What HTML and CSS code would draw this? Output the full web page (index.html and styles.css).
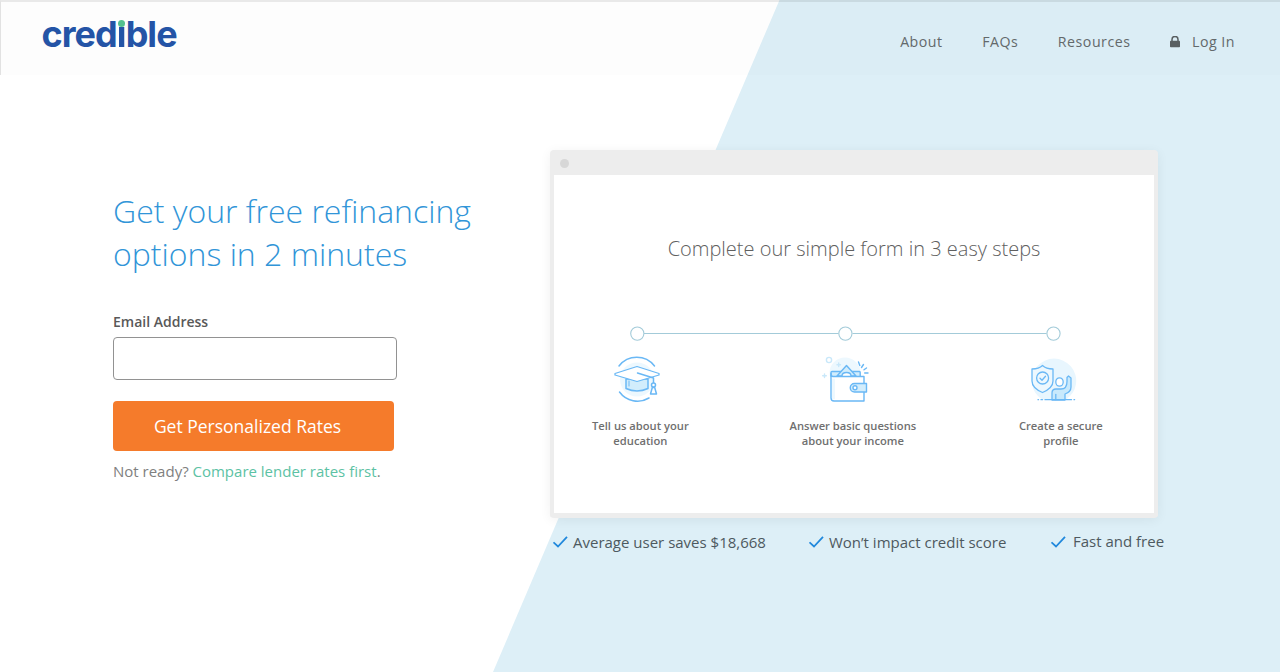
FILE: index.html
```html
<!DOCTYPE html>
<html lang="en">
<head>
<meta charset="utf-8">
<title>Credible</title>
<link rel="stylesheet" href="styles.css">
</head>
<body>
<div class="page">
  <header class="header">
    <a class="logo" aria-label="credible">cred<span class="logo-i">i</span>ble</a>
    <nav class="nav">
      <a class="nav-about">About</a>
      <a class="nav-faqs">FAQs</a>
      <a class="nav-resources">Resources</a>
      <a class="login"><svg width="10" height="12" viewBox="0 0 10 12"><path d="M2 5V3.4a3 3 0 0 1 6 0V5" fill="none" stroke="#595f61" stroke-width="1.5"/><rect y="4.8" width="10" height="6.4" rx=".8" fill="#595f61"/></svg><span>Log In</span></a>
    </nav>
  </header>
  <main class="main">
    <section class="signup">
      <h1 class="headline"><span class="line-one">Get your free refinancing</span><br><span class="line-two">options in 2 minutes</span></h1>
      <label class="label" for="email">Email Address</label>
      <input class="input" id="email" type="email">
      <button class="button">Get Personalized Rates</button>
      <p class="note">Not ready? <a class="link">Compare lender rates first</a>.</p>
    </section>
    <section class="preview">
      <div class="window">
        <div class="window-bar"><span class="window-dot"></span></div>
        <div class="window-body">
          <h2 class="title">Complete our simple form in 3 easy steps</h2>
          <svg class="track" width="433" height="16" viewBox="0 0 433 16" fill="none" stroke="#a3cbd9" stroke-width="1.1"><path d="M15 7.5H209.500M223.500 7.5H417.500"/><circle cx="8.300" cy="7.6" r="6.6"/><circle cx="216.400" cy="7.6" r="6.6"/><circle cx="424.500" cy="7.6" r="6.6"/></svg>
          <div class="steps">
            <div class="step">
              <svg class="icon" width="50" height="50" viewBox="0 0 50 50" fill="none" stroke="#6ab8f5" stroke-width="1.5" stroke-linecap="round" stroke-linejoin="round">
                <circle cx="25" cy="24.500" r="17" fill="#edf8fe" stroke="none"/>
                <path d="M7 11a22.4 22.4 0 0 1 35.500 0M7.500 37a22.300 22.300 0 0 0 29.500 6"/>
                <path d="M14 24v9.500q11 5 22 0V24z" fill="#d2edfc"/>
                <path d="M17 26v5" stroke-width="1"/>
                <path d="M3 18.500v1.500L25 26.500l22-6.500v-1.500L25 11.500z" fill="#fff" stroke-width="1.300"/>
                <path d="M25.500 18l16 5v7"/><circle cx="41.500" cy="30" r="2" fill="#fff"/>
                <path d="M40.300 32.500 38.500 39h6l-1.800-6.500z" fill="#fff"/>
              </svg>
              <p class="caption">Tell us about your<br>education</p>
            </div>
            <div class="step">
              <svg class="icon" width="50" height="50" viewBox="0 0 50 50" fill="none" stroke="#6ab8f5" stroke-width="1.400" stroke-linecap="round" stroke-linejoin="round">
                <circle cx="25" cy="18" r="15.500" fill="#edf8fe" stroke="none"/>
                <g stroke="#c9e8fa"><circle cx="9" cy="5" r="2.600"/><path d="M18.700 8v3.500M17 9.800h3.500M4.500 19v3.500M2.700 20.800h3.600"/></g>
                <path d="M11 21v-3.500q0-1 1-1h27.500q.7 0 .7 1V21" fill="#d2edfc"/>
                <path d="M17 21 26.500 10.500 36 21z" fill="#d2edfc"/>
                <path d="M22 21q0-3.500 4.500-3.500T31 21" fill="#fff"/>
                <path d="M11 18.500v24.500q0 3 3 3h30V21.500H13q-2 0-2-3z" fill="#fff"/>
                <path d="M13.500 23.700v20.500" stroke="#edf8fe" stroke-width="3" stroke-linecap="butt"/>
                <path d="M46.500 28.500v8.500H34.500a4.250 4.250 0 0 1 0-8.500z" fill="#d2edfc"/><circle cx="35" cy="32.700" r="2" fill="#fff"/>
                <path d="M38.500 7l1.300 3.500M43.500 9.500l-2 3M46.500 13l-2.500 1.800M44.700 18h3.300"/>
              </svg>
              <p class="caption">Answer basic questions<br>about your income</p>
            </div>
            <div class="step">
              <svg class="icon" width="50" height="50" viewBox="0 0 50 50" fill="none" stroke="#6ab8f5" stroke-width="1.300" stroke-linecap="round" stroke-linejoin="round">
                <path d="M14 44.500a22.200 22.200 0 1 1 24 0z" fill="#e8f6fe" stroke="none"/>
                <path d="M14.500 10.500Q18 14 25 14v12q0 7-10.500 11.500Q4 33 4 26V14q7 0 10.500-3.500z" fill="#edf8fe"/>
                <circle cx="14.600" cy="23" r="6"/><path d="M12 23.200l2 2 3.500-4"/>
                <path d="M24 45V38q0-4 4-4h5q6 0 6-7.500v-4l1.500-1.500 2.500 2v9q0 5-6 7v6z" fill="#c8e9fc"/>
                <path d="M27.800 44.500V39.500"/>
                <ellipse cx="31.500" cy="27" rx="3.700" ry="4.200" fill="#fff"/>
                <path d="M17 44.700h26.500M10 44.700h.5M13 44.700h1.500M46 44.700h.6"/>
              </svg>
              <p class="caption">Create a secure<br>profile</p>
            </div>
          </div>
        </div>
      </div>
      <div class="benefits">
        <span class="benefit saves"><svg width="15" height="12" viewBox="0 0 15 12"><path d="M.5 6.300 5 10.500 14 .9" fill="none" stroke="#2088dc" stroke-width="1.800"/></svg><span>Average user saves $18,668</span></span>
        <span class="benefit impact"><svg width="15" height="12" viewBox="0 0 15 12"><path d="M.5 6.300 5 10.500 14 .9" fill="none" stroke="#2088dc" stroke-width="1.800"/></svg><span>Won’t impact credit score</span></span>
        <span class="benefit fast"><svg width="15" height="12" viewBox="0 0 15 12"><path d="M.5 6.300 5 10.500 14 .9" fill="none" stroke="#2088dc" stroke-width="1.800"/></svg><span>Fast and free</span></span>
      </div>
    </section>
  </main>
</div>
</body>
</html>
```

FILE: styles.css
```css
* { box-sizing: border-box; }
body { margin: 0; font-family: "Open Sans", "Noto Sans", sans-serif; }
h1, h2, p { margin: 0; font-weight: 300; }
svg { display: block; flex: none; }
.page {
  width: 1280px;
  height: 672px;
  overflow: hidden;
  background: #ddeff7;
  position: relative;
  isolation: isolate;
}
.page::before {
  content: "";
  position: absolute;
  inset: 0;
  z-index: -1;
  background: #fff;
  clip-path: polygon(0 0, 779.5px 0, 493px 100%, 0 100%);
}
.header {
  height: 75px;
  display: flex;
  justify-content: space-between;
  align-items: flex-start;
  padding: 14px 45px 0 40.5px;
  border-top: 2px solid rgba(0, 0, 0, .08);
  border-left: 1px solid rgba(0, 0, 0, .1);
  background: rgba(0, 0, 0, .009);
}
.logo {
  font: 700 36px/36px Inter, sans-serif;
  letter-spacing: -.95px;
  color: #2454a6;
}
.logo-i {
  position: relative;
  color: transparent;
  background: linear-gradient(transparent 14px, #2454a6 14px);
  background-clip: text;
  -webkit-background-clip: text;
}
.logo-i::before {
  content: "";
  position: absolute;
  left: 1px;
  top: 8px;
  width: 7px;
  height: 7px;
  border-radius: 50%;
  background: #55c08f;
}
.nav { display: flex; gap: 39.6px; padding-top: 15px; font-size: 14.2px; line-height: 22px; letter-spacing: .5px; color: #63696b; }
.login { display: flex; align-items: center; gap: 12px; }
.main { display: flex; }
.signup { width: 437px; margin-left: 113px; padding-top: 114px; }
.headline { font-size: 32px; line-height: 43px; color: #3195d8; white-space: nowrap; }
.label { display: block; margin-top: 37px; font-size: 14px; line-height: 20px; font-weight: 600; color: #595959; }
.input { display: block; width: 284px; height: 43px; margin-top: 5px; padding: 0 12px; border: 1px solid #929292; border-radius: 4px; background: #fff; }
.button { display: block; width: 281px; height: 50px; margin-top: 21px; padding: 0 12px 0 0; border: 0; border-radius: 4px; background: #f57b2b; color: #fff; font: 400 17.5px "Open Sans", sans-serif; }
.note { margin-top: 9px; font-size: 15px; line-height: 22px; font-weight: 400; color: #808080; }
.link { color: #5cc2a4; }
.preview { width: 620px; padding-top: 75px; }
.window {
  width: 608px;
  height: 368px;
  border: solid #ededed;
  border-width: 0 4px 5px;
  border-radius: 4px;
  background: #ededed;
  box-shadow: 0 2px 12px rgba(0, 0, 0, .06);
}
.window-bar { height: 25px; padding: 9px 6px; }
.window-dot { display: block; width: 9px; height: 9px; border-radius: 50%; background: #d7d7d7; }
.window-body { height: 338px; background: #fff; padding-top: 60px; }
.title { font-size: 20px; line-height: 28px; color: #606060; text-align: center; white-space: nowrap; }
.track { margin: 63px 0 0 75px; }
.steps { display: grid; grid-template-columns: repeat(3, 160px); gap: 48px; padding-left: 3.4px; margin-top: 13px; }
.step { display: flex; flex-direction: column; align-items: center; }
.caption { margin: 13px 0 0 6px; font-size: 11.2px; line-height: 15px; font-weight: 600; color: #6f6f6f; text-align: center; white-space: nowrap; }
.step:nth-child(2) .caption, .step:nth-child(3) .caption { margin-left: 15px; }
.benefits { display: flex; padding: 13px 0 0 3px; font-size: 15px; line-height: 22px; color: #4d5960; }
.benefit { display: flex; align-items: center; gap: 5px; white-space: nowrap; flex: none; }
.saves { width: 256px; }
.impact { width: 242px; }
.fast { gap: 7px; }
.fast span { margin-top: -2px; }
```
